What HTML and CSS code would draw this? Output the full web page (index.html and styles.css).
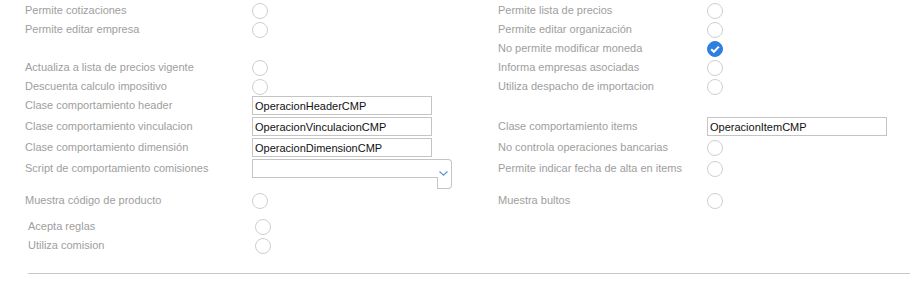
FILE: index.html
```html
<!DOCTYPE html>
<html lang="es">
<head>
    <meta charset="UTF-8">
    <title>Configuración de operación</title>
    <link rel="stylesheet" href="styles.css">
</head>
<body>
    <div class="form">
        <!-- fila 1 -->
        <span class="label">Permite cotizaciones</span>
        <span class="cell"><span class="radio"></span></span>
        <span class="label">Permite lista de precios</span>
        <span class="cell"><span class="radio"></span></span>

        <!-- fila 2 -->
        <span class="label">Permite editar empresa</span>
        <span class="cell"><span class="radio"></span></span>
        <span class="label">Permite editar organización</span>
        <span class="cell"><span class="radio"></span></span>

        <!-- fila 3 -->
        <span class="label"></span>
        <span class="cell"></span>
        <span class="label">No permite modificar moneda</span>
        <span class="cell">
            <span class="radio checked">
                <svg width="16" height="16" viewBox="0 0 16 16"><path d="M4.2 8.2 L6.9 10.8 L11.9 5.6" fill="none" stroke="#fff" stroke-width="2"/></svg>
            </span>
        </span>

        <!-- fila 4 -->
        <span class="label">Actualiza a lista de precios vigente</span>
        <span class="cell"><span class="radio"></span></span>
        <span class="label">Informa empresas asociadas</span>
        <span class="cell"><span class="radio"></span></span>

        <!-- fila 5 -->
        <span class="label">Descuenta calculo impositivo</span>
        <span class="cell"><span class="radio"></span></span>
        <span class="label">Utiliza despacho de importacion</span>
        <span class="cell"><span class="radio"></span></span>

        <!-- fila 6 -->
        <span class="label">Clase comportamiento header</span>
        <span class="cell"><input class="text-input" type="text" value="OperacionHeaderCMP"></span>
        <span class="label"></span>
        <span class="cell"></span>

        <!-- fila 7 -->
        <span class="label">Clase comportamiento vinculacion</span>
        <span class="cell"><input class="text-input" type="text" value="OperacionVinculacionCMP"></span>
        <span class="label">Clase comportamiento items</span>
        <span class="cell"><input class="text-input" type="text" value="OperacionItemCMP"></span>

        <!-- fila 8 -->
        <span class="label">Clase comportamiento dimensión</span>
        <span class="cell"><input class="text-input" type="text" value="OperacionDimensionCMP"></span>
        <span class="label">No controla operaciones bancarias</span>
        <span class="cell"><span class="radio"></span></span>

        <!-- fila 9 -->
        <span class="label">Script de comportamiento comisiones</span>
        <span class="cell">
            <span class="select">
                <span class="select-field"></span>
                <span class="select-toggle">
                    <svg width="9" height="5" viewBox="0 0 9 5"><path d="M0.5 0.5 L4.5 4.2 L8.5 0.5" fill="none" stroke="#5b8fdc" stroke-width="1.1"/></svg>
                </span>
            </span>
        </span>
        <span class="label">Permite indicar fecha de alta en items</span>
        <span class="cell"><span class="radio"></span></span>

        <!-- fila 10 -->
        <span class="label">Muestra código de producto</span>
        <span class="cell"><span class="radio"></span></span>
        <span class="label">Muestra bultos</span>
        <span class="cell"><span class="radio"></span></span>
    </div>

    <div class="form-extra">
        <span class="label">Acepta reglas</span>
        <span class="cell"><span class="radio"></span></span>
        <span class="label">Utiliza comision</span>
        <span class="cell"><span class="radio"></span></span>
    </div>

    <hr class="divider">
</body>
</html>
```

FILE: styles.css
```css
body {
    margin: 0;
    font-family: 'Liberation Sans', Arial, sans-serif;
    font-size: 11px;
    color: #9e9e9e;
    background-color: #fff;
}
.form {
    display: grid;
    grid-template-columns: 227px 246px 209px 1fr;
    align-items: start;
    padding: 1px 0 0 25px;
}
.form-extra {
    display: grid;
    grid-template-columns: 227px 1fr;
    align-items: start;
    padding: 7px 0 0 28px;
}
.label {
    line-height: 19px;
    height: 19px;
    white-space: nowrap;
}
.cell {
    display: block;
    min-height: 19px;
}
.radio {
    display: block;
    box-sizing: border-box;
    width: 16px;
    height: 16px;
    margin-top: 2px;
    border: 1px solid #cfcfcf;
    border-radius: 50%;
    background-color: #fff;
}
.radio.checked {
    border-color: #2f7fe0;
    background-color: #2f7fe0; /* seleccionado */
}
.radio.checked svg {
    display: block;
    margin: -1px 0 0 -1px;
}
.text-input {
    display: block;
    box-sizing: border-box;
    width: 180px;
    height: 19px;
    margin: 0 0 2px 0;
    padding: 0 2px;
    border: 1px solid #c4c4c4;
    border-radius: 0;
    font-family: 'Liberation Sans', Arial, sans-serif;
    font-size: 11px;
    color: #111;
    outline: none;
}
.select {
    display: flex;
    width: 200px;
    margin-bottom: 2px;
}
.select-field {
    flex: 1;
    box-sizing: border-box;
    height: 19px;
    border: 1px solid #c4c4c4;
    border-right: none;
}
.select-toggle {
    box-sizing: border-box;
    width: 15px;
    height: 30px;
    padding: 11px 0 0 2px;
    border: 1px solid #c4c4c4;
    border-left: none;
    border-radius: 0 4px 4px 0;
    /* linea izquierda solo debajo del campo */
    background: linear-gradient(#c4c4c4, #c4c4c4) left bottom / 1px 11px no-repeat;
}
.select-toggle svg {
    display: block;
}
.divider {
    border: none;
    border-top: 1px solid #c8c8c8;
    margin: 18px 5px 0 28px;
}
```
